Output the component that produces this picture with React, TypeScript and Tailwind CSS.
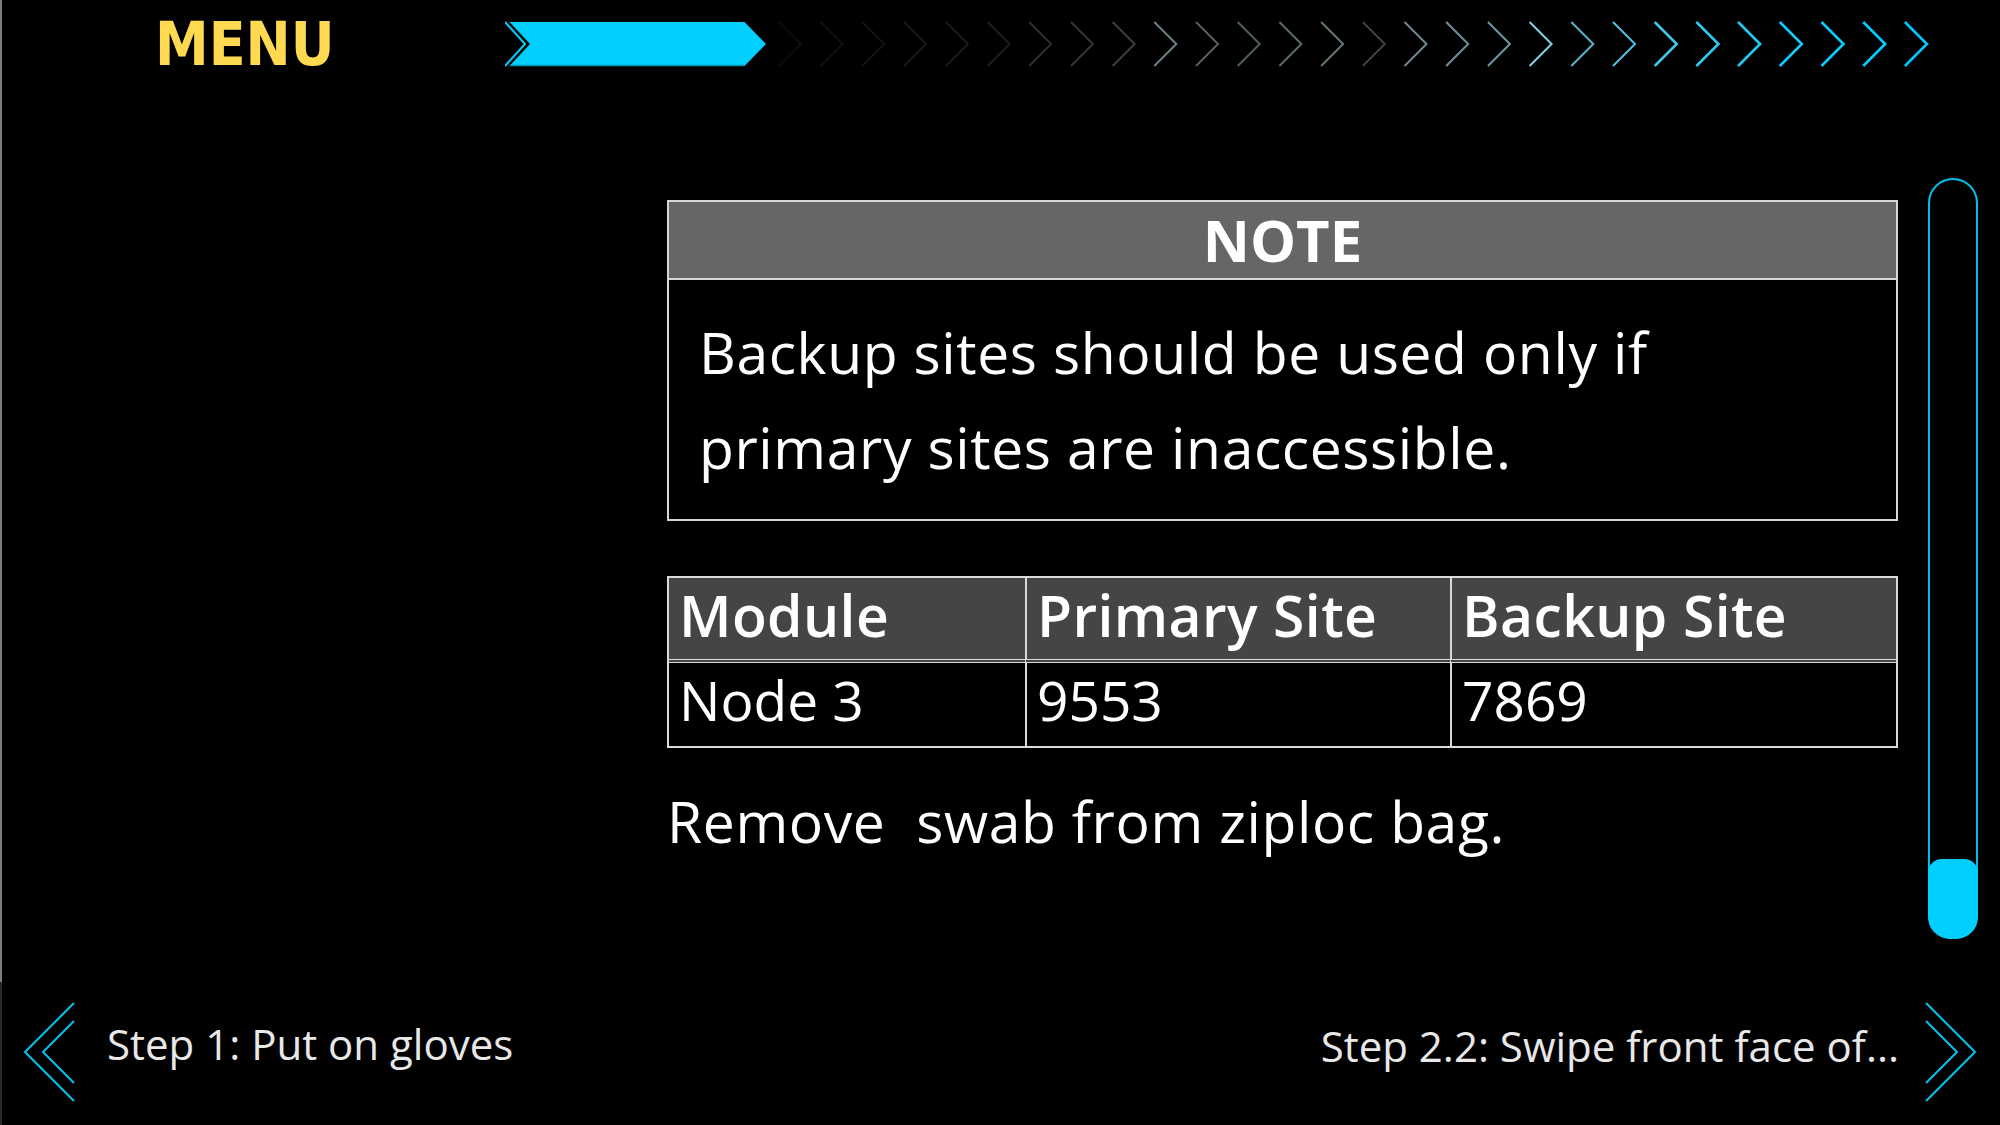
import React from 'react'

const chevronColors = [
  '#0d0d0d', '#111111', '#141414', '#171717', '#1a1a1a', '#1c1c1c', '#2e2e2e',
  '#363636', '#3d3d3d', '#6a8088', '#565f62', '#4f5c60', '#5c6b70', '#637479',
  '#3a4245', '#6f8a90', '#6d9099', '#6a9aa5', '#82d2e8', '#5ab2c8', '#4ec0de',
  '#40c4e6', '#30c8ee', '#22caf2', '#14ccf8', '#0acdfb', '#02cdff', '#00c8ff',
]

function ProgressArrows() {
  return (
    <svg width="1440" height="88" viewBox="0 0 1440 88" className="block">
      <polyline points="0,22 20,44 0,66" fill="none" stroke="#00cfff" strokeWidth="2" />
      <polygon points="4.5,22 25,44 4.5,66 239.5,66 261,44 239.5,22" fill="#00cfff" />
      <line x1="5" y1="65.5" x2="239.5" y2="65.5" stroke="#0094b4" strokeWidth="1.5" />
      {chevronColors.map((c, i) => {
        const x = 274 + i * 41.7
        return (
          <polyline
            key={i}
            points={`${x},22 ${x + 22},44 ${x},66`}
            fill="none"
            stroke={c}
            strokeWidth={i > 20 ? 2.6 : 2}
          />
        )
      })}
    </svg>
  )
}

function NoteBox() {
  return (
    <div className="border-2 border-[#d6d6d6]">
      <div className="h-[78px] bg-[#666666] border-b-2 border-[#d6d6d6] flex items-center justify-center">
        <span className="text-[58px] font-bold leading-none">NOTE</span>
      </div>
      <p className="pt-[25px] pb-[24px] pl-[30px] text-[57px] leading-[95px] tracking-[0.6px]">
        Backup sites should be used only if
        <br />
        primary sites are inaccessible.
      </p>
    </div>
  )
}

const rows = [['Node 3', '9553', '7869']]

function SiteTable() {
  const head = ['Module', 'Primary Site', 'Backup Site']
  return (
    <div className="mt-[55px] border-2 border-[#d9d9d9] grid grid-cols-[356px_425px_1fr]">
      {head.map((h, i) => (
        <div
          key={h}
          className={`h-[85px] bg-[#454547] border-b-4 border-double border-[#d9d9d9] pl-[10px] text-[57px] font-semibold leading-[74px] tracking-[0.4px] ${i > 0 ? 'border-l-2 border-l-[#d9d9d9]' : ''}`}
        >
          {h}
        </div>
      ))}
      {rows.map(r =>
        r.map((v, i) => (
          <div
            key={v}
            className={`h-[83px] pl-[10px] text-[55px] leading-[74px] ${i > 0 ? 'border-l-2 border-[#d9d9d9]' : ''}`}
          >
            {v}
          </div>
        ))
      )}
    </div>
  )
}

function Scrollbar() {
  return (
    <div className="ml-[30px] w-[50px] h-[761px] rounded-full border-2 border-[#00bfe8] relative">
      <div className="absolute -left-[2px] -bottom-[2px] w-[50px] h-[80px] bg-[#00cfff] rounded-t-[14px] rounded-b-[22px]" />
    </div>
  )
}

export default function App() {
  return (
    <div className="w-[2000px] h-[1125px] bg-black flex flex-col overflow-hidden font-['Open_Sans',sans-serif] text-white">
      <div className="flex flex-col h-[982px] shadow-[inset_2px_0_0_#7d7d7d]">
        <header className="h-[88px] flex items-center">
          <div className="w-[505px] pl-[155px]">
            <span className="block font-['DejaVu_Sans_Condensed','DejaVu_Sans',sans-serif] font-stretch-condensed font-bold text-[60px] leading-[60px] text-[#ffd94f]">
              MENU
            </span>
          </div>
          <ProgressArrows />
        </header>
        <main className="flex pl-[667px] pt-[90px]">
          <section className="w-[1231px] mt-[22px] flex flex-col">
            <NoteBox />
            <SiteTable />
            <p className="mt-[33px] text-[57px] leading-[80px] tracking-[0.6px] whitespace-pre">Remove  swab from ziploc bag.</p>
          </section>
          <Scrollbar />
        </main>
      </div>
      <footer className="h-[143px] flex items-start justify-between pt-[20px] px-[23px] shadow-[inset_2px_0_0_#2a2a2a]">
        <div className="flex items-start">
          <svg width="54" height="100" viewBox="0 0 54 100" className="block">
            <polyline points="51,1 2,50 51,99" fill="none" stroke="#00c4f0" strokeWidth="2" />
            <polyline points="51,19 20,50 51,81" fill="none" stroke="#00c4f0" strokeWidth="2" />
          </svg>
          <span className="ml-[30px] mt-[13px] text-[42px] leading-[57px] text-[#e8e8e8]">Step 1: Put on gloves</span>
        </div>
        <div className="flex items-start">
          <span className="mr-[24px] mt-[15px] text-[42px] leading-[57px] text-[#e8e8e8]">Step 2.2: Swipe front face of...</span>
          <svg width="54" height="100" viewBox="0 0 54 100" className="block">
            <polyline points="3,1 52,50 3,99" fill="none" stroke="#00c4f0" strokeWidth="2" />
            <polyline points="3,19 34,50 3,81" fill="none" stroke="#00c4f0" strokeWidth="2" />
          </svg>
        </div>
      </footer>
    </div>
  )
}
